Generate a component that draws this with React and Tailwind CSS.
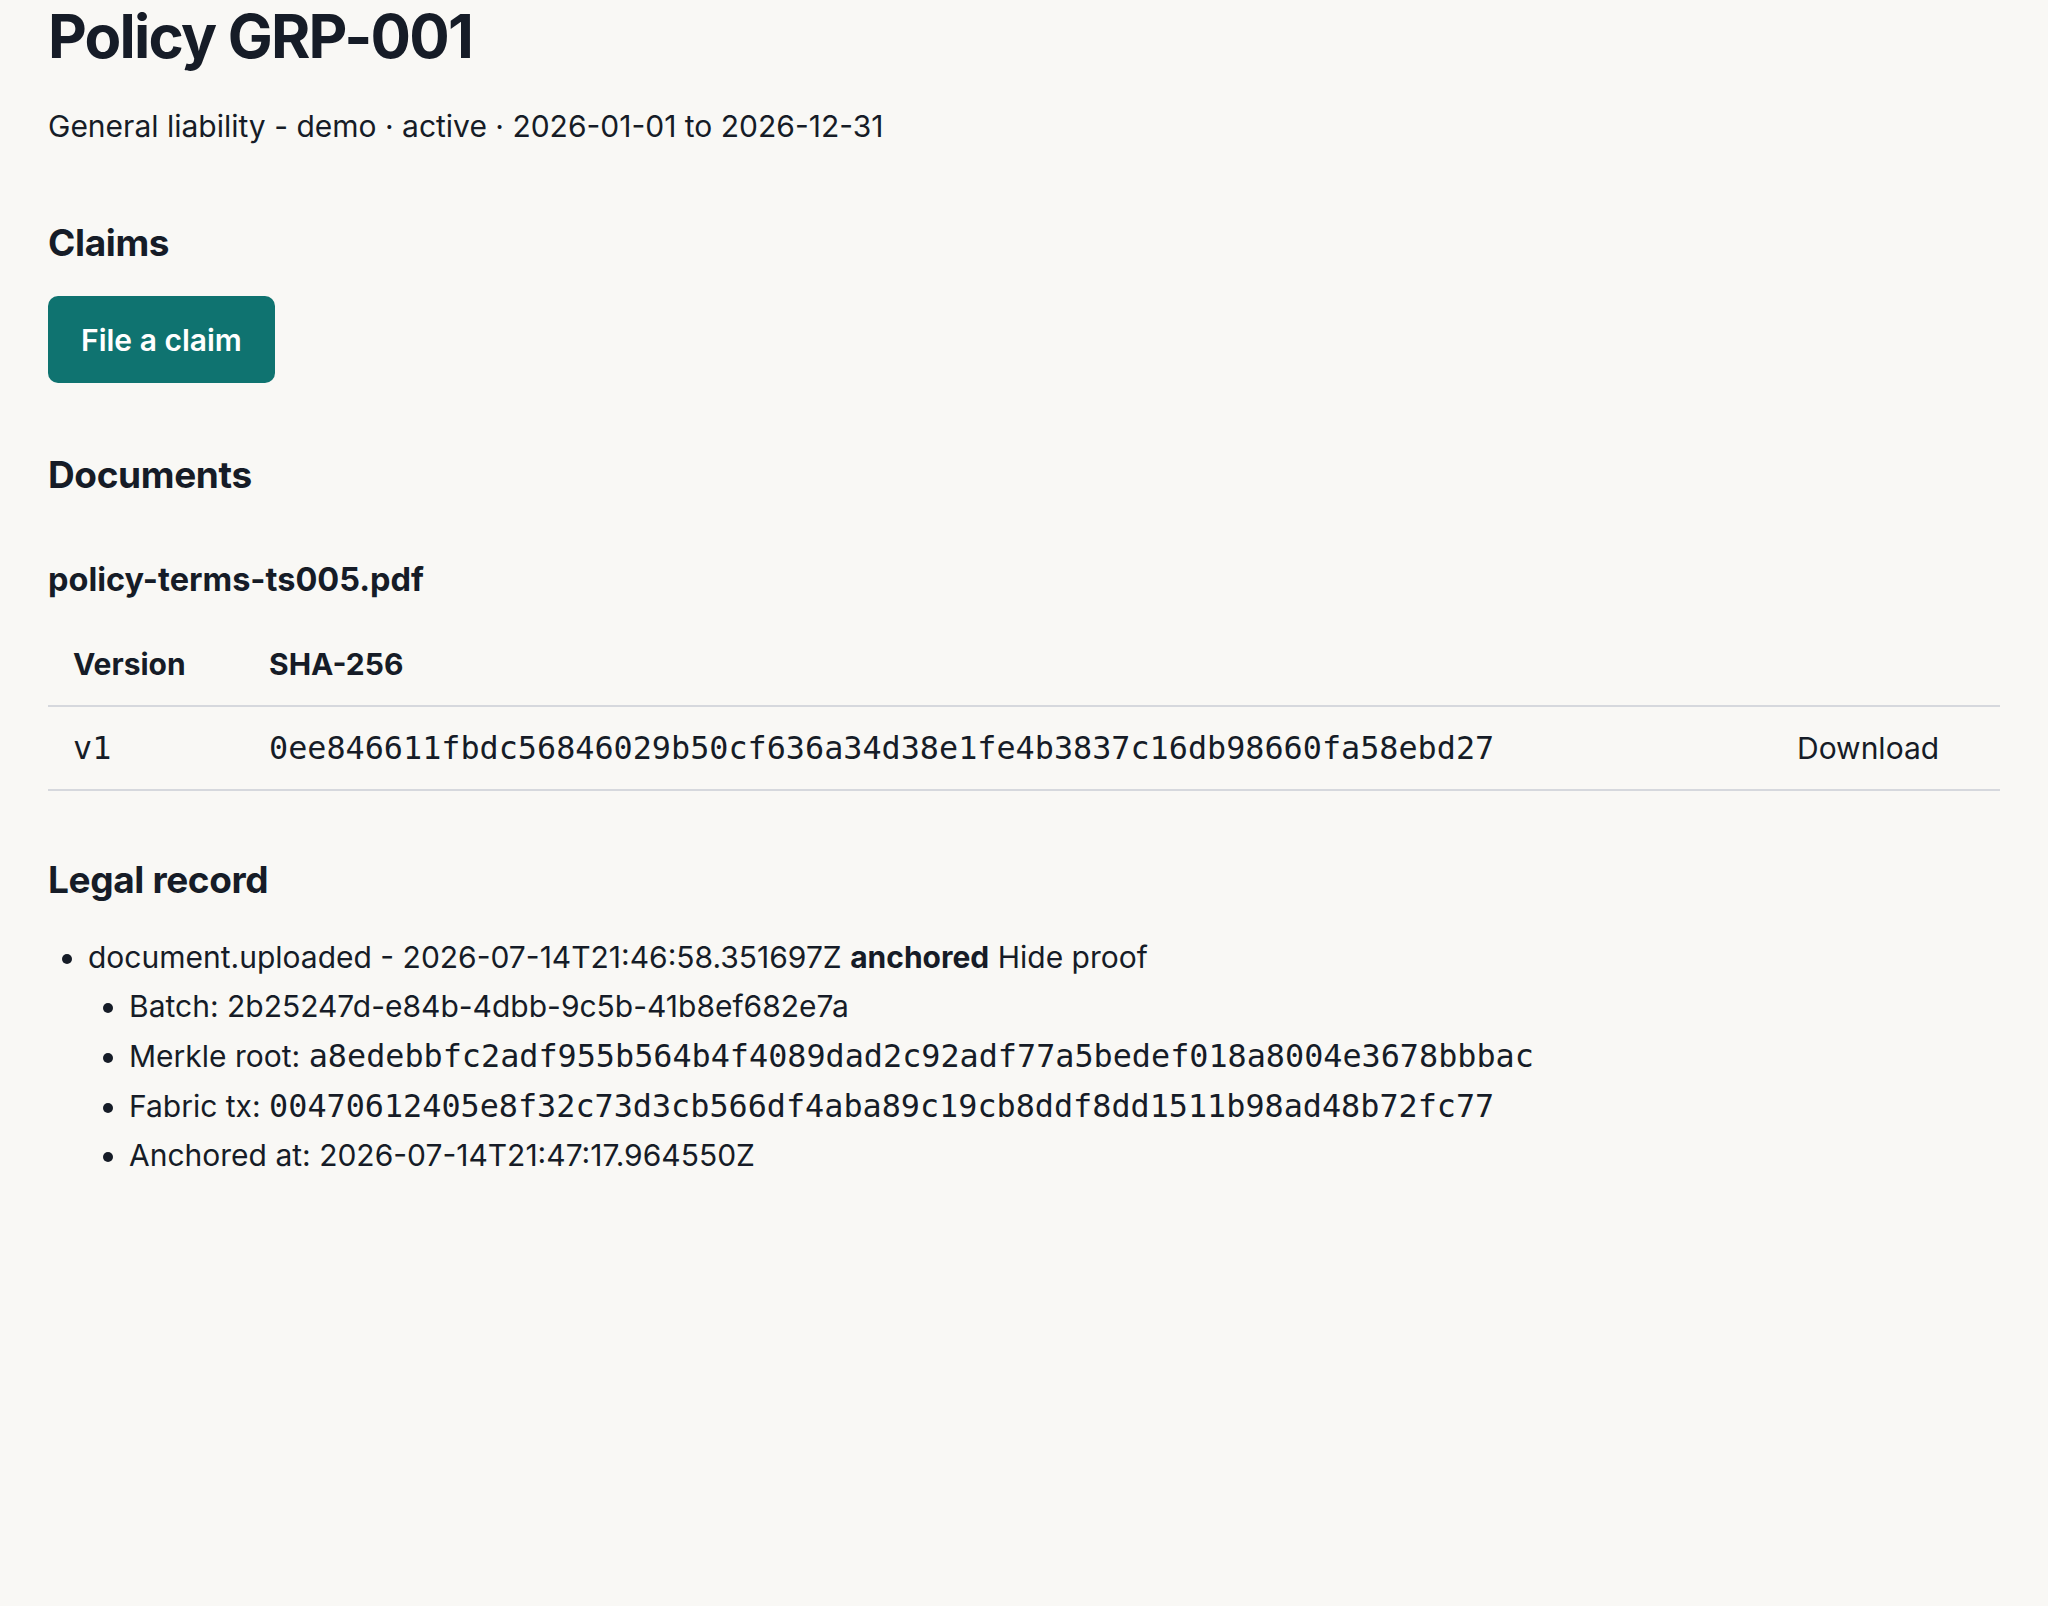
import React from 'react';

const mono = "font-['DejaVu_Sans_Mono','Liberation_Mono',monospace]";

const proof = [
  { label: 'Batch', value: '2b25247d-e84b-4dbb-9c5b-41b8ef682e7a', code: false },
  { label: 'Merkle root', value: 'a8edebbfc2adf955b564b4f4089dad2c92adf77a5bedef018a8004e3678bbbac', code: true },
  { label: 'Fabric tx', value: '00470612405e8f32c73d3cb566df4aba89c19cb8ddf8dd1511b98ad48b72fc77', code: true },
  { label: 'Anchored at', value: '2026-07-14T21:47:17.964550Z', code: false },
];

const App = () => {
  return (
    <div className="min-h-[1606px] bg-[#f9f8f5] px-[48px] text-[#161c27] font-['Inter','Liberation_Sans',sans-serif]">
      <h1 className="text-[60px] leading-[72px] font-bold tracking-[-0.03em]">Policy GRP-001</h1>
      <p className="mt-[33px] text-[30px] leading-[42px]">
        General liability - demo · active · 2026-01-01 to 2026-12-31
      </p>

      <h2 className="mt-[74px] text-[37px] leading-[44px] font-bold tracking-[-0.01em]">Claims</h2>
      <button className="mt-[31px] h-[87px] px-[33px] rounded-[10px] bg-[#0f7370] text-white text-[30px] leading-[42px] font-semibold">
        File a claim
      </button>

      <h2 className="mt-[70px] text-[37px] leading-[44px] font-bold tracking-[-0.01em]">Documents</h2>
      <h3 className="mt-[63px] text-[32.5px] leading-[40px] font-bold">policy-terms-ts005.pdf</h3>

      <table className="mt-[23px] w-full table-fixed border-collapse text-[30px] leading-[42px]">
        <thead>
          <tr className="border-b-2 border-[#d6d8dd]">
            <th className="w-[197px] px-[25px] py-[20px] text-left font-bold">Version</th>
            <th className="px-[24px] py-[20px] text-left font-bold">SHA-256</th>
            <th className="w-[227px] px-[24px] py-[20px]"></th>
          </tr>
        </thead>
        <tbody>
          <tr className="border-b-2 border-[#d6d8dd]">
            <td className={`px-[25px] py-[20px] text-[31.8px] ${mono}`}>v1</td>
            <td className={`px-[24px] py-[20px] text-[31.8px] ${mono}`}>
              0ee846611fbdc56846029b50cf636a34d38e1fe4b3837c16db98660fa58ebd27
            </td>
            <td className="px-[24px] py-[20px]">Download</td>
          </tr>
        </tbody>
      </table>

      <h2 className="mt-[67px] text-[37px] leading-[44px] font-bold tracking-[-0.01em]">Legal record</h2>
      <ul className="mt-[31px] list-disc pl-[40px] text-[30px] leading-[49px]">
        <li>
          document.uploaded - 2026-07-14T21:46:58.351697Z <strong className="font-bold">anchored</strong> Hide proof
          <ul className="list-disc pl-[41px]">
            {proof.map((p) => (
              <li key={p.label}>
                {p.label}:{' '}
                {p.code ? <code className={`text-[31.8px] ${mono}`}>{p.value}</code> : p.value}
              </li>
            ))}
          </ul>
        </li>
      </ul>
    </div>
  );
};

export default App;
